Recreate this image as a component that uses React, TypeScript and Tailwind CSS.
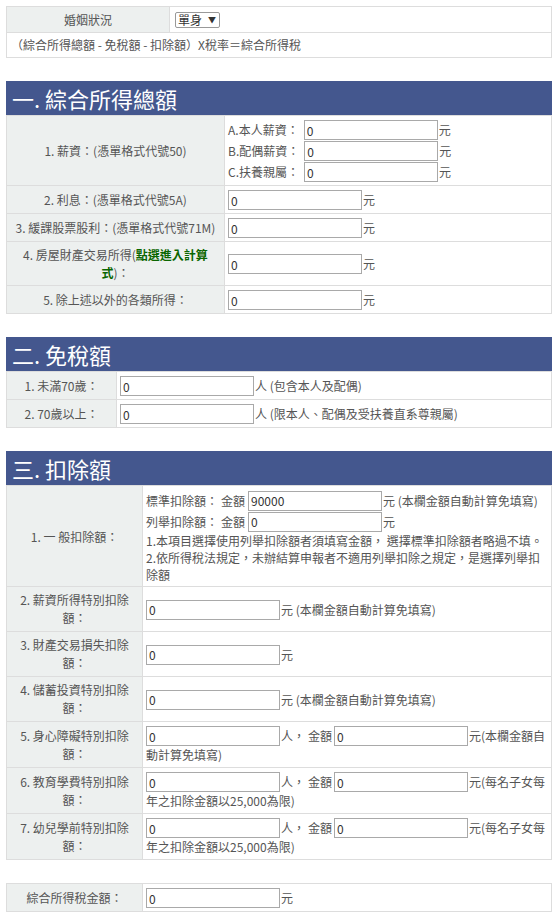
import React from "react";

const Inp = ({ v = "0" }: { v?: string }) => (
  <input
    readOnly
    value={v}
    className="h-[20px] w-[134px] shrink-0 border border-[#a9a9a9] bg-white px-[2px] text-[12px] leading-[18px] text-[#333] outline-none"
  />
);

const L =
  "border border-[#dddddd] bg-[#edf0ef] px-[6px] pt-[4px] pb-[3px] text-center align-middle leading-[18px]";
const V =
  "border border-[#dddddd] bg-white pl-[3px] pr-[4px] pt-[4px] pb-[3px] align-middle leading-[18px]";
const L2 =
  "border border-[#dddddd] bg-[#edf0ef] px-[6px] pt-[4px] pb-[4px] text-center align-middle leading-[18px]";

const Header = ({ t }: { t: string }) => (
  <div className="h-[34px] bg-[#44578e] px-[6px] text-[22px] leading-[34px] text-white">{t}</div>
);

const Simple = ({ after }: { after?: React.ReactNode }) => (
  <div className="flex h-[20px] items-center whitespace-nowrap">
    <Inp />
    <span className="ml-[1px]">{after ?? "元"}</span>
  </div>
);

const TwoInput = ({ tail, tail2 }: { tail: string; tail2: string }) => (
  <div>
    <div className="flex h-[20px] items-center whitespace-nowrap">
      <Inp />
      <span className="ml-[1px]">人，</span>
      <span className="ml-[3px] mr-[2px]">金額</span>
      <Inp />
      <span className="ml-[1px]">{tail}</span>
    </div>
    <div className="whitespace-nowrap leading-[18px]">{tail2}</div>
  </div>
);

export default function App() {
  return (
    <div className="w-[558px] bg-white px-[6px] pt-[6px] pb-[9px] font-['Noto_Sans_CJK_TC','Noto_Sans',sans-serif] text-[12px] text-[#555]">
      {/* top */}
      <table className="w-full table-fixed border-collapse">
        <tbody>
          <tr>
            <td className={`${L} w-[163px]`}>婚姻狀況</td>
            <td className={V}>
              <div className="ml-[2px] flex h-[16px] w-[45px] items-center rounded-[2px] border border-[#999] bg-white px-[2px] text-[12px] leading-[14px] text-[#333]">
                <span>單身</span>
                <span className="ml-[6px] text-[8px] text-[#333]">▼</span>
              </div>
            </td>
          </tr>
          <tr>
            <td colSpan={2} className="border border-[#dddddd] bg-white px-[4px] pt-[3px] pb-[3px] leading-[18px]">
              （綜合所得總額 - 免稅額 - 扣除額）X稅率＝綜合所得稅
            </td>
          </tr>
        </tbody>
      </table>

      {/* section 1 */}
      <div className="mt-[23px]">
        <Header t="一. 綜合所得總額" />
        <table className="w-full table-fixed border-collapse">
          <tbody>
            <tr>
              <td className={`${L} w-[218px]`}>1. 薪資：(憑單格式代號50)</td>
              <td className={V}>
                <div className="flex flex-col gap-[1px]">
                  {["A.本人薪資：", "B.配偶薪資：", "C.扶養親屬："].map((t) => (
                    <div key={t} className="flex h-[20px] items-center whitespace-nowrap">
                      <span className="mr-[5px]">{t}</span>
                      <Inp />
                      <span className="ml-[1px]">元</span>
                    </div>
                  ))}
                </div>
              </td>
            </tr>
            <tr>
              <td className={L}>2. 利息：(憑單格式代號5A)</td>
              <td className={V}>
                <Simple />
              </td>
            </tr>
            <tr>
              <td className={`${L} whitespace-nowrap px-[2px]`}>3. 緩課股票股利：(憑單格式代號71M)</td>
              <td className={V}>
                <Simple />
              </td>
            </tr>
            <tr>
              <td className={L}>
                <span className="whitespace-nowrap">
                  4. 房屋財產交易所得(<span className="font-bold text-[#0a6600]">點選進入計算</span>
                </span>
                <br />
                <span className="font-bold text-[#0a6600]">式</span>)：
              </td>
              <td className={V}>
                <Simple />
              </td>
            </tr>
            <tr>
              <td className={L}>5. 除上述以外的各類所得：</td>
              <td className={V}>
                <Simple />
              </td>
            </tr>
          </tbody>
        </table>
      </div>

      {/* section 2 */}
      <div className="mt-[23px]">
        <Header t="二. 免稅額" />
        <table className="w-full table-fixed border-collapse">
          <tbody>
            <tr>
              <td className={`${L} w-[110px]`}>1. 未滿70歲：</td>
              <td className={V}>
                <Simple after="人 (包含本人及配偶)" />
              </td>
            </tr>
            <tr>
              <td className={L}>2. 70歲以上：</td>
              <td className={V}>
                <Simple after="人 (限本人、配偶及受扶養直系尊親屬)" />
              </td>
            </tr>
          </tbody>
        </table>
      </div>

      {/* section 3 */}
      <div className="mt-[23px]">
        <Header t="三. 扣除額" />
        <table className="w-full table-fixed border-collapse">
          <tbody>
            <tr>
              <td className={`${L} w-[136px]`}>1. 一 般扣除額：</td>
              <td className={V}>
                <div className="flex h-[21px] items-center whitespace-nowrap">
                  <span>標準扣除額：</span>
                  <span className="ml-[3px] mr-[3px]">金額</span>
                  <Inp v="90000" />
                  <span className="ml-[1px]">元 (本欄金額自動計算免填寫)</span>
                </div>
                <div className="flex h-[21px] items-center whitespace-nowrap">
                  <span>列舉扣除額：</span>
                  <span className="ml-[3px] mr-[3px]">金額</span>
                  <Inp />
                  <span className="ml-[1px]">元</span>
                </div>
                <div className="whitespace-nowrap leading-[17px]">
                  1.本項目選擇使用列舉扣除額者須填寫金額， 選擇標準扣除額者略過不填。
                  <br />
                  2.依所得稅法規定，未辦結算申報者不適用列舉扣除之規定，是選擇列舉扣
                  <br />
                  除額
                </div>
              </td>
            </tr>
            <tr>
              <td className={L2}>
                2. 薪資所得特別扣除
                <br />
                額：
              </td>
              <td className={V}>
                <Simple after="元 (本欄金額自動計算免填寫)" />
              </td>
            </tr>
            <tr>
              <td className={L2}>
                3. 財產交易損失扣除
                <br />
                額：
              </td>
              <td className={V}>
                <Simple />
              </td>
            </tr>
            <tr>
              <td className={L2}>
                4. 儲蓄投資特別扣除
                <br />
                額：
              </td>
              <td className={V}>
                <Simple after="元 (本欄金額自動計算免填寫)" />
              </td>
            </tr>
            <tr>
              <td className={L2}>
                5. 身心障礙特別扣除
                <br />
                額：
              </td>
              <td className={V}>
                <TwoInput tail="元(本欄金額自" tail2="動計算免填寫)" />
              </td>
            </tr>
            <tr>
              <td className={L2}>
                6. 教育學費特別扣除
                <br />
                額：
              </td>
              <td className={V}>
                <TwoInput tail="元(每名子女每" tail2="年之扣除金額以25,000為限)" />
              </td>
            </tr>
            <tr>
              <td className={L2}>
                7. 幼兒學前特別扣除
                <br />
                額：
              </td>
              <td className={V}>
                <TwoInput tail="元(每名子女每" tail2="年之扣除金額以25,000為限)" />
              </td>
            </tr>
          </tbody>
        </table>
      </div>

      {/* final */}
      <table className="mt-[23px] w-full table-fixed border-collapse">
        <tbody>
          <tr>
            <td className={`${L} w-[136px]`}>綜合所得稅金額：</td>
            <td className={V}>
              <Simple />
            </td>
          </tr>
        </tbody>
      </table>
    </div>
  );
}
